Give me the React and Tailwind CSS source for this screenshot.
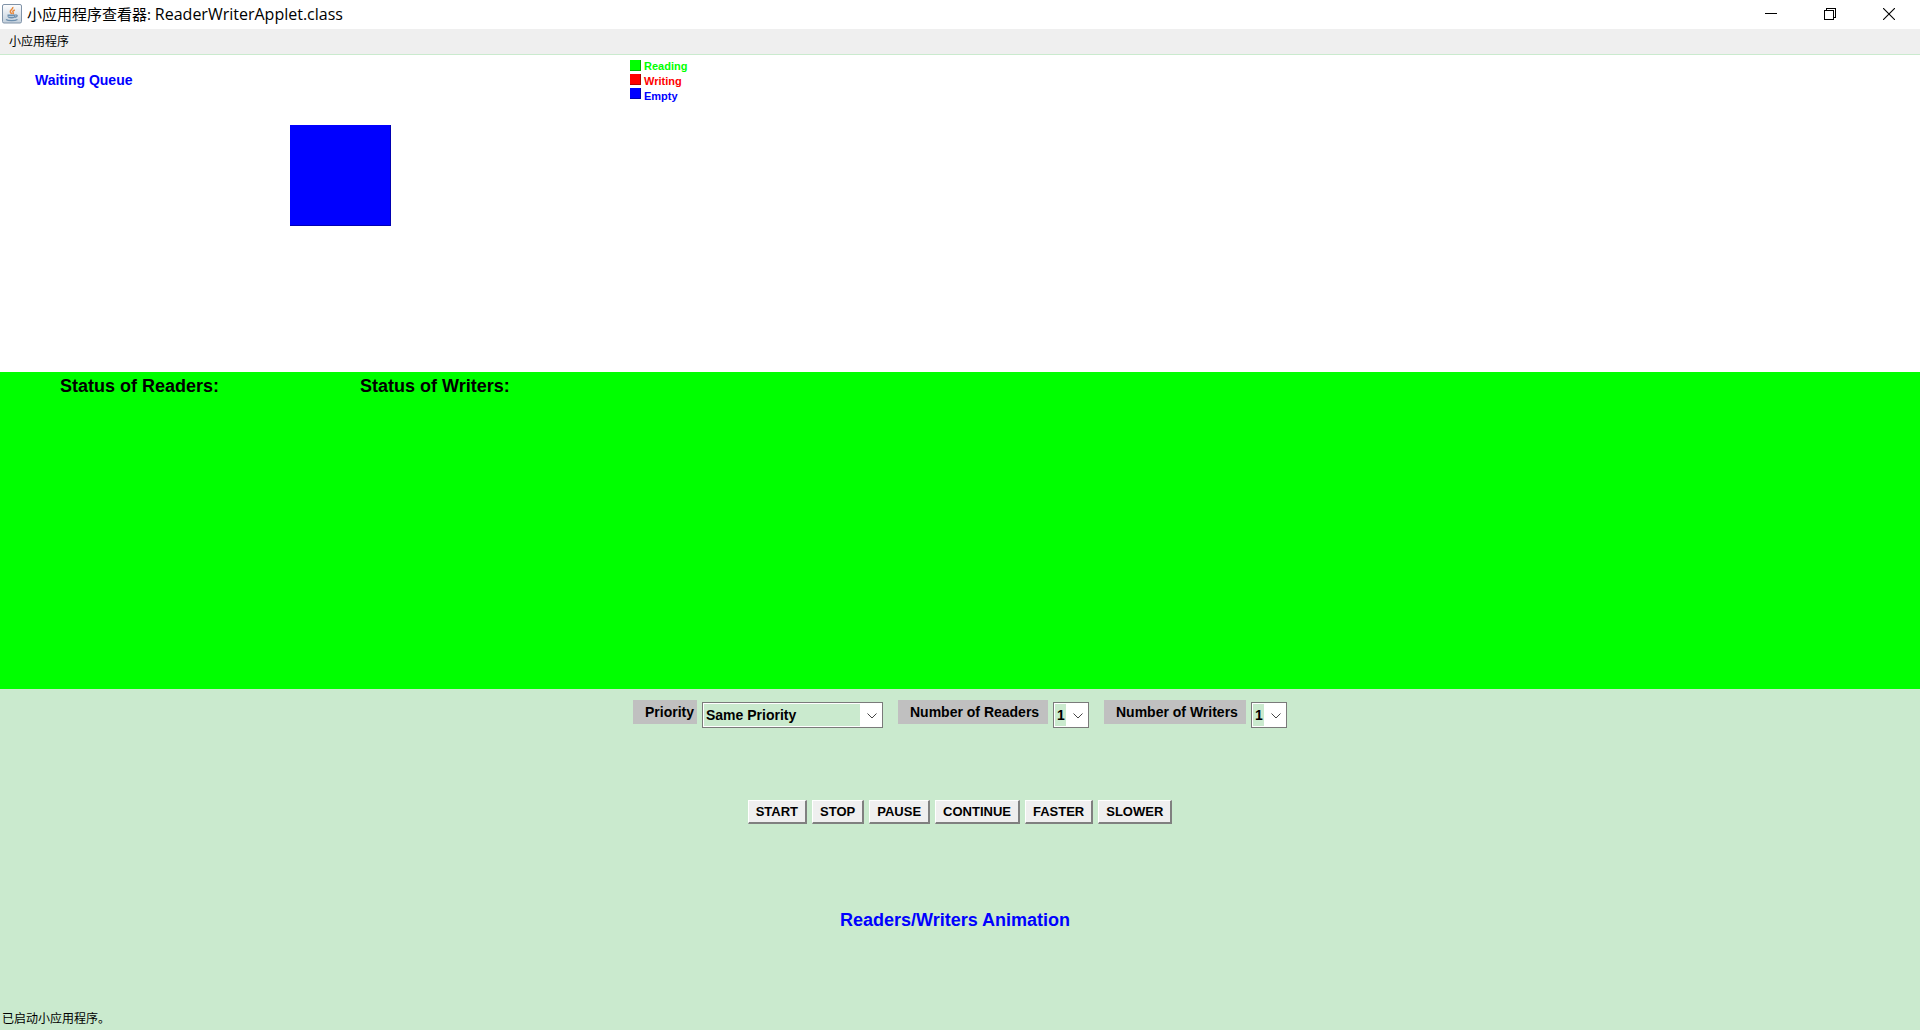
import React from 'react';

const LEGEND = [
  { label: 'Reading', box: 'bg-[#00ff00] border-[#00b200]', text: 'text-[#00ff00]' },
  { label: 'Writing', box: 'bg-[#ff0000] border-[#b20000]', text: 'text-[#ff0000]' },
  { label: 'Empty', box: 'bg-[#0000ff] border-[#0000b2]', text: 'text-[#0000ff]' },
];

const ACTIONS = ['START', 'STOP', 'PAUSE', 'CONTINUE', 'FASTER', 'SLOWER'];
const PRIORITIES = ['Same Priority', 'Readers Priority', 'Writers Priority'];
const COUNTS = ['1', '2', '3', '4', '5'];

function JavaIcon() {
  return (
    <svg width="20" height="20" viewBox="0 0 20 20" aria-hidden="true">
      <defs>
        <linearGradient id="tile" x1="0" y1="0" x2="0" y2="1">
          <stop offset="0" stopColor="#fdfdfe" />
          <stop offset="1" stopColor="#c3d0dc" />
        </linearGradient>
      </defs>
      <rect x="0.5" y="0.5" width="19" height="18.5" rx="1.5" fill="url(#tile)" stroke="#8093a8" />
      <path d="M10.8 3c.7 2-3 2.8-2.5 4.8.2.8 1 1.3 1.4 2.2M12.8 6c-2 .8-2.5 1.5-1.6 2.6.4.5.2 1-.4 1.6" fill="none" stroke="#e8873a" strokeWidth="1.5" />
      <path d="M5.5 10.5h8v1.5c0 1.5-1 2.5-4 2.5s-4-1-4-2.5z" fill="#6d8fae" />
      <path d="M13.5 11c2.5-.3 2.2 2-.6 2.3M4 15.5c2 1.6 9 1.6 11.5 0" fill="none" stroke="#6d8fae" strokeWidth="1.3" />
      <path d="M6.5 12.5h5.5" stroke="#c6d5e2" strokeWidth="0.8" />
    </svg>
  );
}

function TitleBar() {
  return (
    <header className="flex h-[29px] items-center justify-between bg-white pb-0.5 pl-0.5">
      <div className="flex items-center gap-[5px]">
        <JavaIcon />
        <h1 className="font-['Open_Sans','Noto_Sans_CJK_SC',sans-serif] text-[15px] leading-5 font-normal text-black">
          小应用程序查看器: <span className="text-base leading-5">ReaderWriterApplet.class</span>
        </h1>
      </div>
      <div className="flex h-full pr-0.5 text-black">
        <button aria-label="Minimize" className="flex w-[59px] items-center justify-center">
          <svg width="12" height="12" shapeRendering="crispEdges"><path d="M0 5.5h12" stroke="currentColor" /></svg>
        </button>
        <button aria-label="Restore" className="flex w-[59px] items-center justify-center">
          <svg width="12" height="12" fill="none" stroke="currentColor" shapeRendering="crispEdges">
            <path d="M.5 2.5h9v9h-9zM2.5 2.5v-2h9v9h-2" />
          </svg>
        </button>
        <button aria-label="Close" className="flex w-[59px] items-center justify-center">
          <svg width="12" height="12"><path d="M0 0l12 12M12 0L0 12" stroke="currentColor" strokeWidth="1.1" /></svg>
        </button>
      </div>
    </header>
  );
}

function Choice({ id, label, options, labelWidth, width }) {
  return (
    <div className="flex items-start gap-[5px]">
      <label htmlFor={id} className={`h-6 bg-[#c0c0c0] pl-3 leading-6 ${labelWidth}`}>{label}</label>
      <div className={`relative mt-0.5 h-[26px] border border-[#7a7a7a] ${width}`}>
        <select
          id={id}
          className="block h-full w-full appearance-none border border-r-[22px] border-white bg-[#caeace] pl-0.5 leading-5 outline-none"
        >
          {options.map((o) => <option key={o}>{o}</option>)}
        </select>
        <svg className="pointer-events-none absolute top-[10px] right-[5px]" width="10" height="6" fill="none">
          <path d="M.5.5L5 5L9.5.5" stroke="#444" />
        </svg>
      </div>
    </div>
  );
}

export default function App() {
  return (
    <div className="flex min-h-screen flex-col bg-[#caeace] font-['Liberation_Sans',Arial,sans-serif] text-sm font-bold text-black">
      <TitleBar />
      <nav className="mb-px flex h-[25px] items-center bg-[#efefef] px-[9px] pb-0.5">
        <button className="font-['Noto_Sans_CJK_SC',sans-serif] text-xs font-normal">小应用程序</button>
      </nav>

      <main className="grid flex-1 grid-rows-3">
        <section className="flex bg-white">
          <div className="w-[630px] pt-[15px] pl-[35px]">
            <h2 className="leading-5 text-[#0000ff]">Waiting Queue</h2>
            <div className="mt-[35px] ml-[255px] size-[101px] border-r border-b border-[#0000b2] bg-[#0000ff]" />
          </div>
          <div className="flex gap-[3px] pt-1 text-[11px] leading-[15px]">
            <div className="flex flex-col gap-[3px] pt-px" aria-hidden="true">
              {LEGEND.map((l) => <span key={l.label} className={`size-[11px] border-r border-b ${l.box}`} />)}
            </div>
            <ul>
              {LEGEND.map((l) => <li key={l.label} className={l.text}>{l.label}</li>)}
            </ul>
          </div>
        </section>

        <section className="flex bg-[#00ff00] pt-0.5 pl-[60px] text-lg leading-6">
          <h2 className="w-[300px]">Status of Readers:</h2>
          <h2>Status of Writers:</h2>
        </section>

        <section className="grid grid-rows-3">
          <div className="flex justify-center gap-[15px] pt-[11px]">
            <Choice id="priority" label="Priority" options={PRIORITIES} labelWidth="w-16" width="w-[181px]" />
            <Choice id="readers" label="Number of Readers" options={COUNTS} labelWidth="w-[150px]" width="w-9" />
            <Choice id="writers" label="Number of Writers" options={COUNTS} labelWidth="w-[142px]" width="w-9" />
          </div>
          <div className="flex items-start justify-center gap-[5px] pt-[5px]">
            {ACTIONS.map((a) => (
              <button
                key={a}
                className="h-6 border-t border-r-2 border-b-2 border-l border-t-white border-r-[#808080] border-b-[#808080] border-l-white bg-[#efefef] px-[7px] pt-px text-[13px] leading-5"
              >
                {a}
              </button>
            ))}
          </div>
          <h2 className="pt-2 pr-[10px] text-center text-lg leading-6 text-[#0000ff]">Readers/Writers Animation</h2>
        </section>
      </main>

      <footer className="h-6 pl-0.5 font-['Noto_Sans_CJK_SC',sans-serif] text-xs leading-6 font-normal">已启动小应用程序。</footer>
    </div>
  );
}
